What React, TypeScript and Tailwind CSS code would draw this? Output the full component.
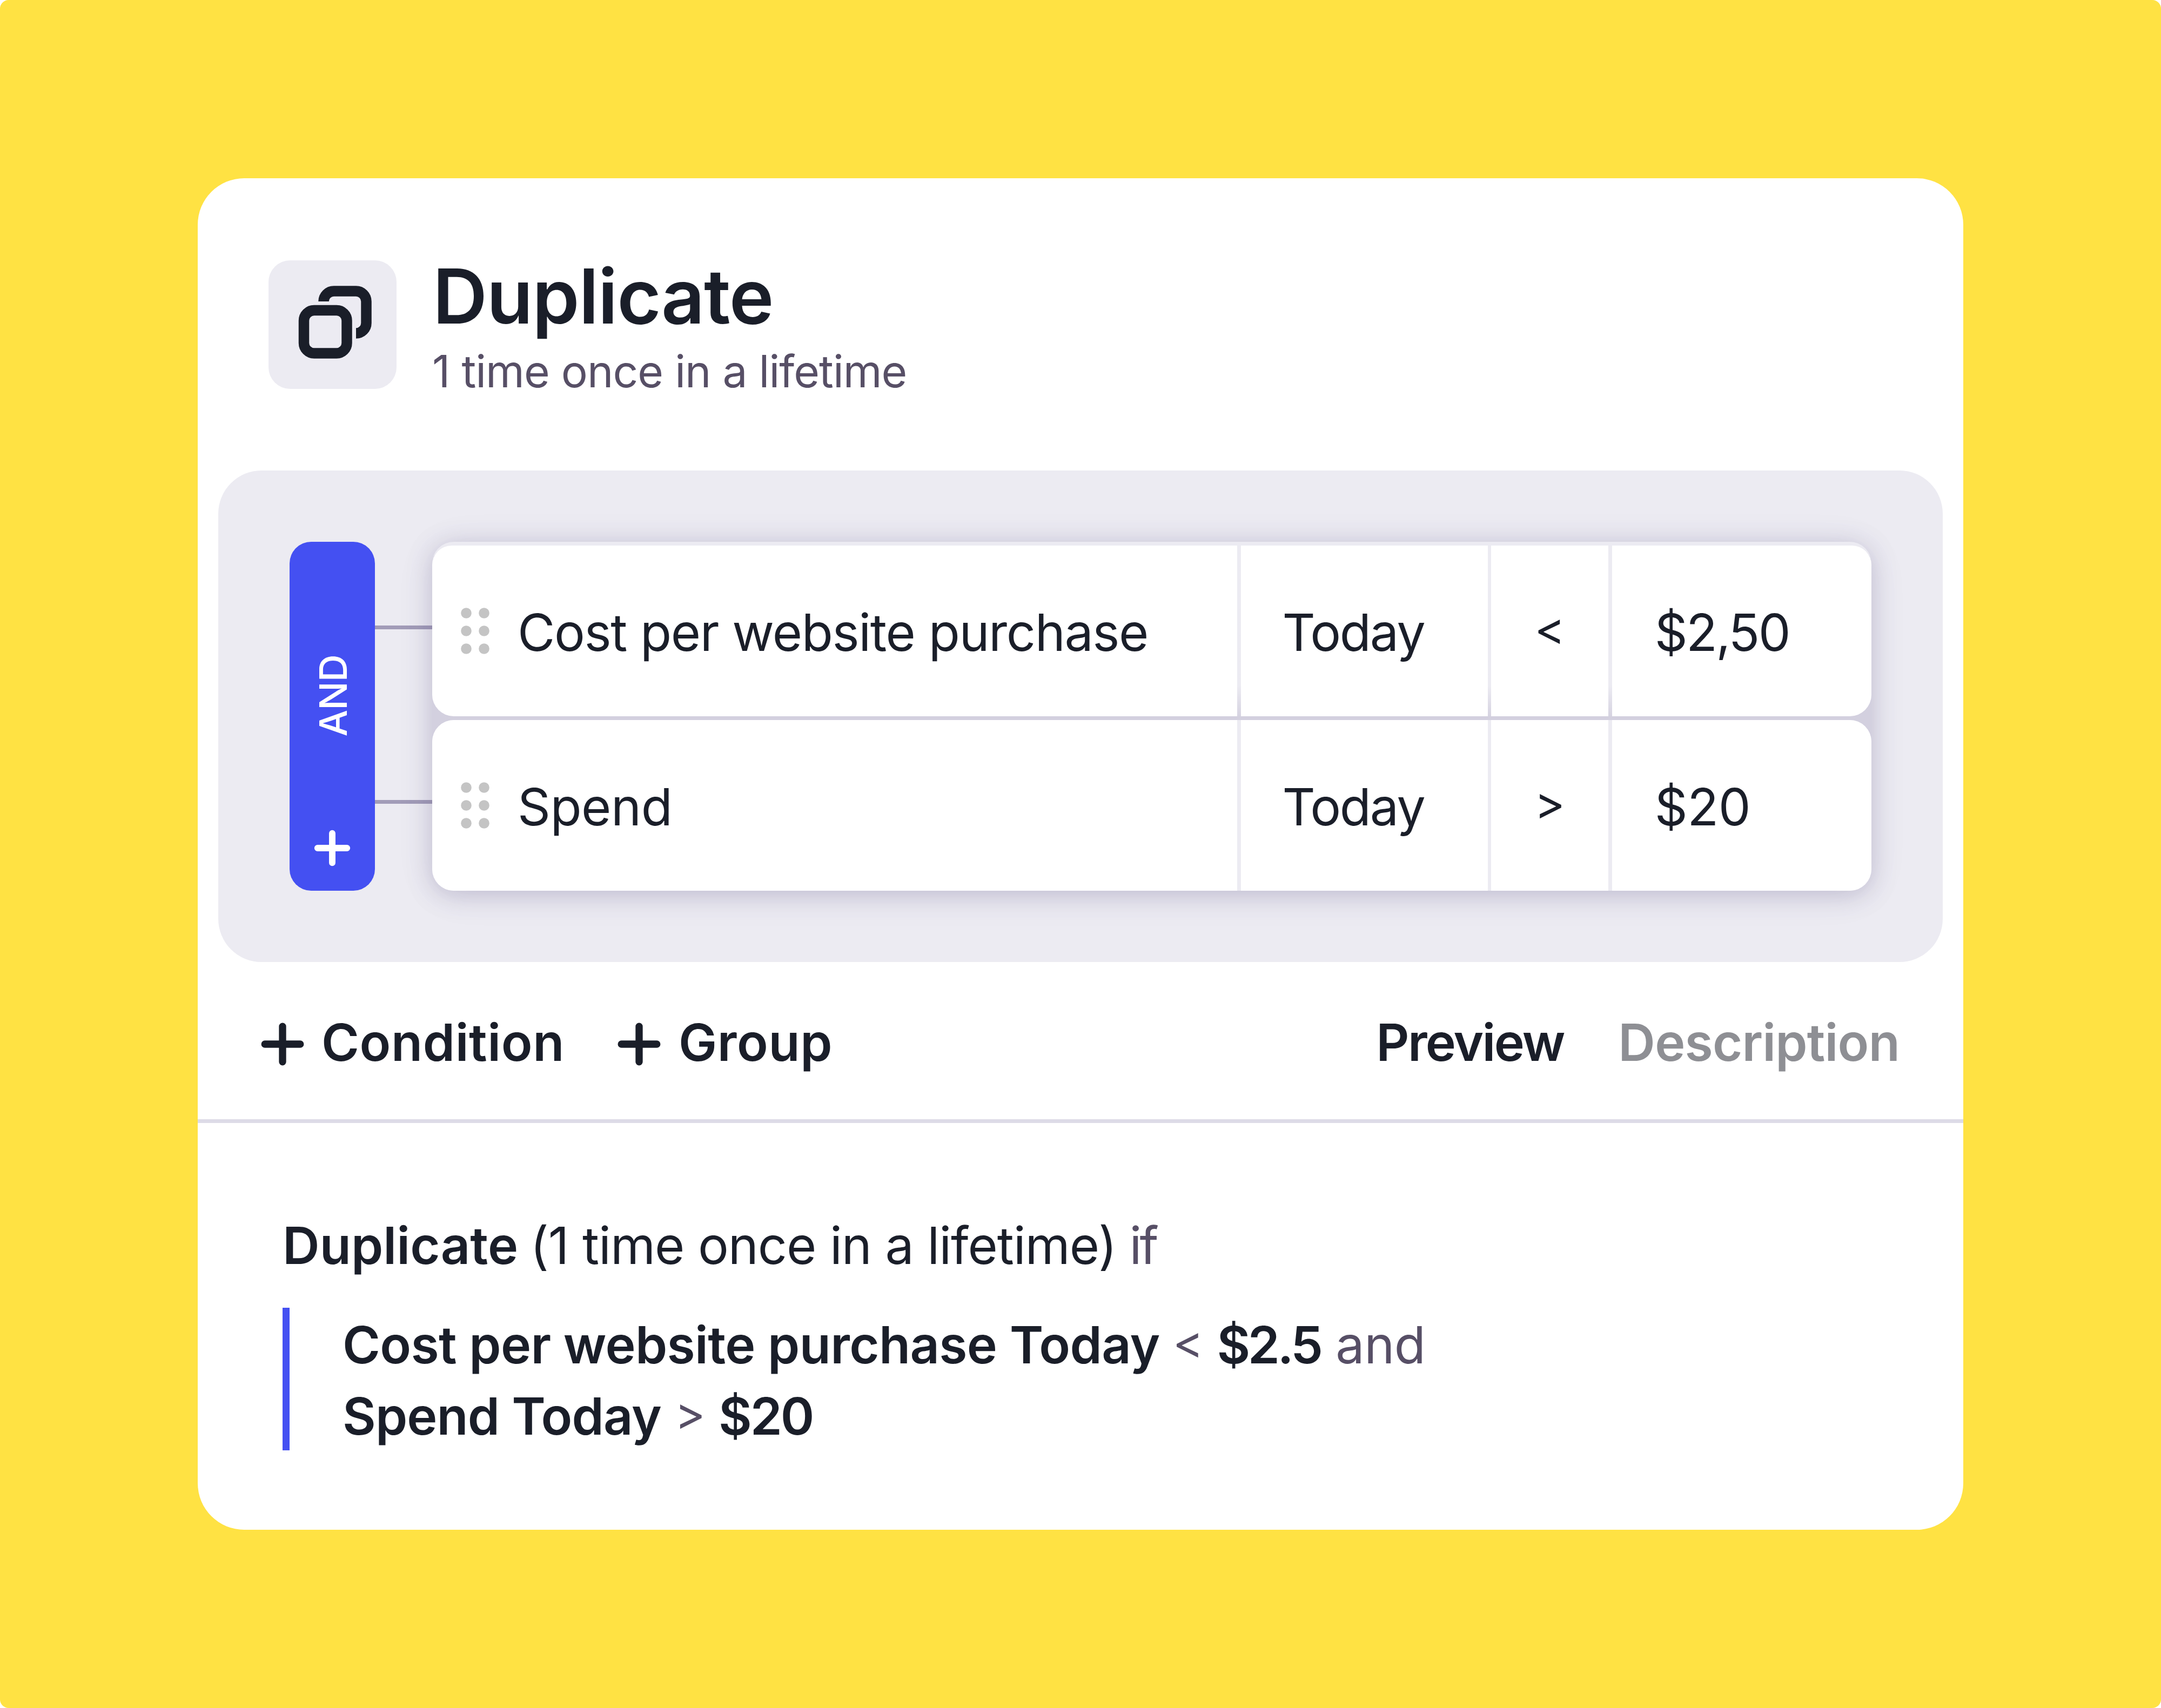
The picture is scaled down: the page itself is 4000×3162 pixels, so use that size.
import clsx from "clsx";

const conditions = [
  { metric: "Cost per website purchase", metricClass: "tracking-[-1.45px]", period: "Today", operator: "<", value: "$2,50", valueClass: "tracking-[-2.7px]" },
  { metric: "Spend", metricClass: "tracking-[-0.5px]", period: "Today", operator: ">", value: "$20", valueClass: "tracking-[-0.5px]" },
];

function DuplicateIcon() {
  return (
    <svg viewBox="0 0 237 238" fill="none" stroke="currentColor" strokeWidth="19.5" className="h-full w-full">
      <rect x="65.5" y="92.5" width="79.5" height="79.5" rx="19" />
      <path d="M102 76a19 19 0 0 1 19-19h41a19 19 0 0 1 19 19v40a19 19 0 0 1-19 19" />
    </svg>
  );
}

function PlusIcon({ className, strokeWidth }: { className: string; strokeWidth: number }) {
  return (
    <svg viewBox="0 0 80 80" fill="none" stroke="currentColor" strokeWidth={strokeWidth} strokeLinecap="round" className={className}>
      <path d="M40 8v64M8 40h64" />
    </svg>
  );
}

function DragHandle() {
  return (
    <svg viewBox="0 0 53 86" fill="#c4c4c4" className="h-[86px] w-[53px] shrink-0">
      {[10, 43].map((cx) => [10, 43, 76].map((cy) => <circle key={`${cx}-${cy}`} cx={cx} cy={cy} r="9.8" />))}
    </svg>
  );
}

function ConditionRow({ condition, className }: { condition: (typeof conditions)[number]; className: string }) {
  return (
    <div
      className={clsx(
        "grid h-[316px] grid-cols-[1490px_457px_217px_1fr] gap-x-[6.6px] overflow-hidden text-[95px] leading-[132px]",
        className
      )}
    >
      <div className="flex items-center bg-white pl-[53px]">
        <DragHandle />
        <span className={clsx("ml-[52px] pt-1.5", condition.metricClass)}>{condition.metric}</span>
      </div>
      <div className="flex items-center bg-white pt-1.5 pl-[77px] tracking-[-2.3px]">{condition.period}</div>
      <div className="flex items-center justify-center bg-white pb-2.5 text-[86px]">{condition.operator}</div>
      <div className={clsx("flex items-center bg-white pt-1.5 pl-[79px]", condition.valueClass)}>{condition.value}</div>
    </div>
  );
}

export default function App() {
  return (
    <div className="bg-white font-['Inter',sans-serif] text-[#1a1e29]">
      <div className="flex h-[3162px] w-[4000px] items-start rounded-2xl bg-[#ffe243] pt-[330px] pl-[366px]">
        <div className="h-[2502px] w-[3268px] rounded-[86px] bg-white">
          {/* Header */}
          <div className="flex h-[541px] items-start pt-[152px] pl-[131px]">
            <div className="h-[238px] w-[237px] rounded-[40px] bg-[#ecebf2]">
              <DuplicateIcon />
            </div>
            <div className="-mt-[25px] ml-[67px]">
              <h1 className="text-[140px] leading-[182px] font-semibold tracking-[-1.25px]">Duplicate</h1>
              <p className="-ml-px text-[82px] leading-[98px] tracking-[-1px] text-[#574f66]">1 time once in a lifetime</p>
            </div>
          </div>

          {/* Condition group */}
          <div className="mx-[38px] flex h-[910px] rounded-[80px] bg-[#ecebf2] p-[132px]">
            <div className="flex h-[646px] w-[158px] shrink-0 flex-col items-center justify-end rounded-[40px] bg-[#4450f2] pb-[45px] text-white">
              <span className="ml-1 rotate-180 text-[70px] leading-[70px] font-medium tracking-[-0.5px] [writing-mode:vertical-rl]">AND</span>
              <PlusIcon className="mt-[172px] h-[68px] w-[68px]" strokeWidth={14} />
            </div>
            <div className="flex w-[106px] shrink-0 flex-col">
              <div className="mt-[155px] h-[7px] bg-[#a29cb8]" />
              <div className="mt-[316px] h-[7px] bg-[#a29cb8]" />
            </div>
            <div className="flex h-[646px] flex-1 flex-col gap-[7px] rounded-[40px] border-t-[7px] border-[#ecebf2] bg-[#d3d0df] shadow-[0_7px_46px_rgba(89,80,130,0.28),0_7px_80px_rgba(89,80,130,0.06)]">
              <ConditionRow
                condition={conditions[0]}
                className="rounded-t-[36px] rounded-b-[40px] bg-linear-to-b from-[#ecebf2] from-82% to-[#d6d3e1]"
              />
              <ConditionRow condition={conditions[1]} className="rounded-[40px] bg-[#ecebf2]" />
            </div>
          </div>

          {/* Actions */}
          <div className="flex h-[298px] items-center justify-between border-b-[7px] border-[#dddbe7] pr-[118px] pl-[116px] text-[95px] leading-[132px] font-semibold">
            <div className="flex items-center">
              <PlusIcon className="mt-3 h-[82px] w-[82px]" strokeWidth={13} />
              <span className="ml-[31px] w-[547px] pt-1.5 tracking-[0.6px]">Condition</span>
              <PlusIcon className="mt-3 h-[82px] w-[82px]" strokeWidth={13} />
              <span className="ml-8 pt-1.5 tracking-[0.6px]">Group</span>
            </div>
            <div className="flex items-center pt-1.5">
              <span className="w-[448px] tracking-[-2.7px]">Preview</span>
              <span className="tracking-[-0.8px] text-[#8e8f94]">Description</span>
            </div>
          </div>

          {/* Rule summary */}
          <div className="pt-[161px] pl-[157px] text-[95px] leading-[132px] text-[#574f66]">
            <p className="flex">
              <span className="font-semibold tracking-[0.1px] text-[#1a1e29]">Duplicate</span>
              <span className="ml-[22px] tracking-[-1.1px] text-[#1a1e29]">(1 time once in a lifetime)</span>
              <span className="ml-6 tracking-[-4px]">if</span>
            </p>
            <div className="mt-[49px] h-[264px] border-l-[13px] border-[#4450f2] pt-[3px] pl-[98px]">
              <p className="flex">
                <span className="font-semibold tracking-[-0.65px] text-[#1a1e29]">Cost per website purchase Today</span>
                <span className="-mt-1.5 ml-6 text-[86px]">&lt;</span>
                <span className="ml-[25px] font-semibold tracking-[-4.6px] text-[#1a1e29]">$2.5</span>
                <span className="ml-7 tracking-[-0.5px]">and</span>
              </p>
              <p className="flex">
                <span className="font-semibold tracking-[-0.9px] text-[#1a1e29]">Spend Today</span>
                <span className="-mt-1.5 ml-[25px] text-[86px]">&gt;</span>
                <span className="ml-6 font-semibold tracking-[-3px] text-[#1a1e29]">$20</span>
              </p>
            </div>
          </div>
        </div>
      </div>
    </div>
  );
}
